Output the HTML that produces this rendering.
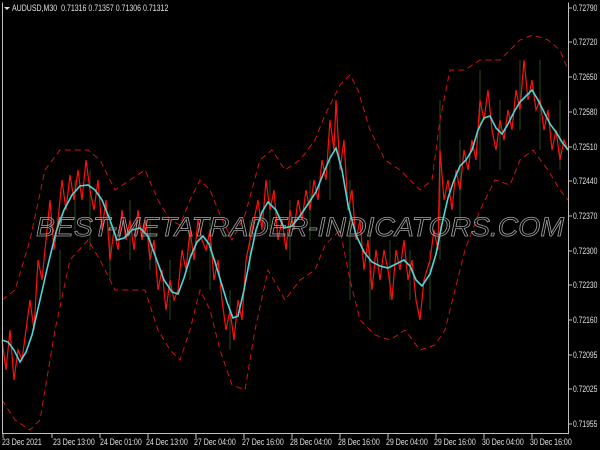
<!DOCTYPE html>
<html><head><meta charset="utf-8"><style>
html,body{margin:0;padding:0;background:#000;width:600px;height:450px;overflow:hidden}
svg{display:block}
text{font-family:"Liberation Sans",sans-serif}
</style></head><body>
<svg width="600" height="450" viewBox="0 0 600 450" xmlns="http://www.w3.org/2000/svg">
<rect width="600" height="450" fill="#000"/>
<g stroke="#2a4a1a" stroke-width="1">
<path d="M60 250V300M75 180V230M90 170V250M110 210V280M130 200V260M150 220V270M170 260V320M190 230V280M210 220V290M230 290V350M250 220V270M270 180V230M290 200V260M310 180V240M330 140V200M350 180V300M370 230V320M390 240V300M410 250V300M430 250V310M440 100V260M460 140V230M480 70V170M500 100V170M520 60V130M540 60V150M560 100V170"/>
</g>
<g fill="none" stroke="#d01010" stroke-width="1" stroke-dasharray="6,4">
<polyline points="2,300 15,290 30,240 45,170 60,150 75,150 88,150 100,160 115,190 130,180 145,170 158,200 170,220 180,225 190,200 200,180 210,190 220,215 232,240 245,215 260,160 272,150 285,170 300,160 315,140 325,115 340,85 350,75 358,90 370,130 385,160 400,170 420,190 432,180 440,120 450,70 465,70 480,60 500,60 520,40 533,35 548,40 560,50 568,70"/>
<polyline points="2,400 15,420 30,430 40,420 55,330 70,260 88,240 100,260 115,290 130,290 145,290 158,330 170,350 180,360 190,330 200,290 210,310 220,350 232,385 245,390 255,330 268,270 285,300 300,280 315,270 325,245 340,230 350,280 360,320 375,335 390,340 405,330 420,350 435,345 445,330 455,290 465,250 480,210 495,180 510,185 520,160 533,150 548,170 560,190 568,200"/>
</g>
<polyline fill="none" stroke="#ff1010" stroke-width="1.2" points="2,340 6,370 10,330 14,380 18,350 22,360 26,330 30,300 34,330 38,260 42,280 46,240 50,200 54,250 58,220 62,180 66,210 70,175 74,200 78,170 82,200 86,160 90,190 94,210 98,180 102,230 106,200 110,260 114,230 118,250 122,210 126,240 130,220 134,250 138,210 142,240 146,220 150,260 154,240 158,290 162,270 166,310 170,280 174,300 178,290 182,250 186,270 190,230 194,260 198,220 202,240 206,250 210,230 214,280 218,260 222,300 226,330 230,310 234,340 238,300 242,320 246,260 250,240 254,220 258,200 262,230 266,180 270,210 274,190 278,240 282,220 286,250 290,210 294,230 298,200 302,220 306,190 310,210 314,180 318,200 322,160 326,180 330,120 334,150 336,100 340,170 344,140 348,210 352,190 356,240 360,220 364,270 368,240 372,290 376,250 380,280 384,250 388,270 392,300 396,250 400,270 404,240 408,280 412,260 416,300 420,320 424,280 430,260 434,230 438,250 440,150 444,200 448,180 452,210 456,170 460,190 464,150 468,170 472,140 476,160 480,100 484,120 488,90 492,130 496,150 500,120 504,140 508,110 512,130 516,90 520,110 524,60 528,100 532,80 536,110 540,100 544,130 548,110 552,150 556,130 560,160 564,140 568,150"/>
<polyline fill="none" stroke="#4ad8d8" stroke-width="1.6" points="2,340 8,342 14,350 20,362 26,352 32,335 40,300 48,265 56,232 64,210 72,195 80,186 88,185 95,190 102,200 110,220 117,240 124,238 132,230 140,228 148,236 156,258 164,280 172,292 178,294 184,278 190,258 197,242 203,236 209,244 215,262 221,282 227,302 233,318 238,316 244,290 250,258 256,230 262,212 268,202 276,210 284,228 292,226 300,216 308,204 316,192 324,172 330,158 336,148 342,170 348,205 356,235 364,252 372,262 380,266 388,268 396,264 404,260 410,266 416,280 422,286 430,274 436,254 442,224 448,198 454,180 460,166 466,160 472,150 478,130 484,118 490,116 496,128 502,134 508,124 514,112 520,102 526,96 532,90 538,100 544,112 550,124 556,132 562,142 568,150"/>
<text x="300" y="236" text-anchor="middle" font-size="27" font-style="italic" fill="none" stroke="#a0a0a0" stroke-width="0.8" textLength="528" lengthAdjust="spacingAndGlyphs">BEST-METATRADER-INDICATORS.COM</text>
<path d="M2.5 2.5V433.5H568.5V2.5" fill="none" stroke="#c0c0c0" stroke-width="1"/>
<path d="M4 7L10 7L7 10Z" fill="#ddd"/>
<text transform="translate(12,11) scale(0.78,1)" font-size="9" fill="#e0e0e0" xml:space="preserve">AUDUSD,M30  0.71316 0.71357 0.71306 0.71312</text>
<path d="M568 8h4M568 42h4M568 77h4M568 112h4M568 147h4M568 181h4M568 216h4M568 251h4M568 285h4M568 320h4M568 355h4M568 389h4M568 424h4" stroke="#c0c0c0"/>
<g font-size="9" fill="#e0e0e0">
<text transform="translate(573,11) scale(0.75,1)">0.72790</text><text transform="translate(573,45) scale(0.75,1)">0.72720</text><text transform="translate(573,80) scale(0.75,1)">0.72650</text><text transform="translate(573,115) scale(0.75,1)">0.72580</text><text transform="translate(573,150) scale(0.75,1)">0.72510</text><text transform="translate(573,184) scale(0.75,1)">0.72440</text><text transform="translate(573,219) scale(0.75,1)">0.72370</text><text transform="translate(573,254) scale(0.75,1)">0.72300</text><text transform="translate(573,288) scale(0.75,1)">0.72230</text><text transform="translate(573,323) scale(0.75,1)">0.72160</text><text transform="translate(573,358) scale(0.75,1)">0.72095</text><text transform="translate(573,392) scale(0.75,1)">0.72025</text><text transform="translate(573,427) scale(0.75,1)">0.71955</text>
</g>
<path d="M3 434v4M52 434v4M100 434v4M148 434v4M196 434v4M244 434v4M292 434v4M340 434v4M388 434v4M436 434v4M484 434v4M532 434v4" stroke="#c0c0c0"/>
<g font-size="9" fill="#e0e0e0">
<text transform="translate(2,445) scale(0.78,1)">23 Dec 2021</text><text transform="translate(53,445) scale(0.78,1)">23 Dec 13:00</text><text transform="translate(100,445) scale(0.78,1)">24 Dec 01:00</text><text transform="translate(146,445) scale(0.78,1)">24 Dec 13:00</text><text transform="translate(194,445) scale(0.78,1)">27 Dec 04:00</text><text transform="translate(242,445) scale(0.78,1)">27 Dec 16:00</text><text transform="translate(290,445) scale(0.78,1)">28 Dec 04:00</text><text transform="translate(338,445) scale(0.78,1)">28 Dec 16:00</text><text transform="translate(386,445) scale(0.78,1)">29 Dec 04:00</text><text transform="translate(434,445) scale(0.78,1)">29 Dec 16:00</text><text transform="translate(482,445) scale(0.78,1)">30 Dec 04:00</text><text transform="translate(530,445) scale(0.78,1)">30 Dec 16:00</text>
</g>
</svg>
</body></html>
